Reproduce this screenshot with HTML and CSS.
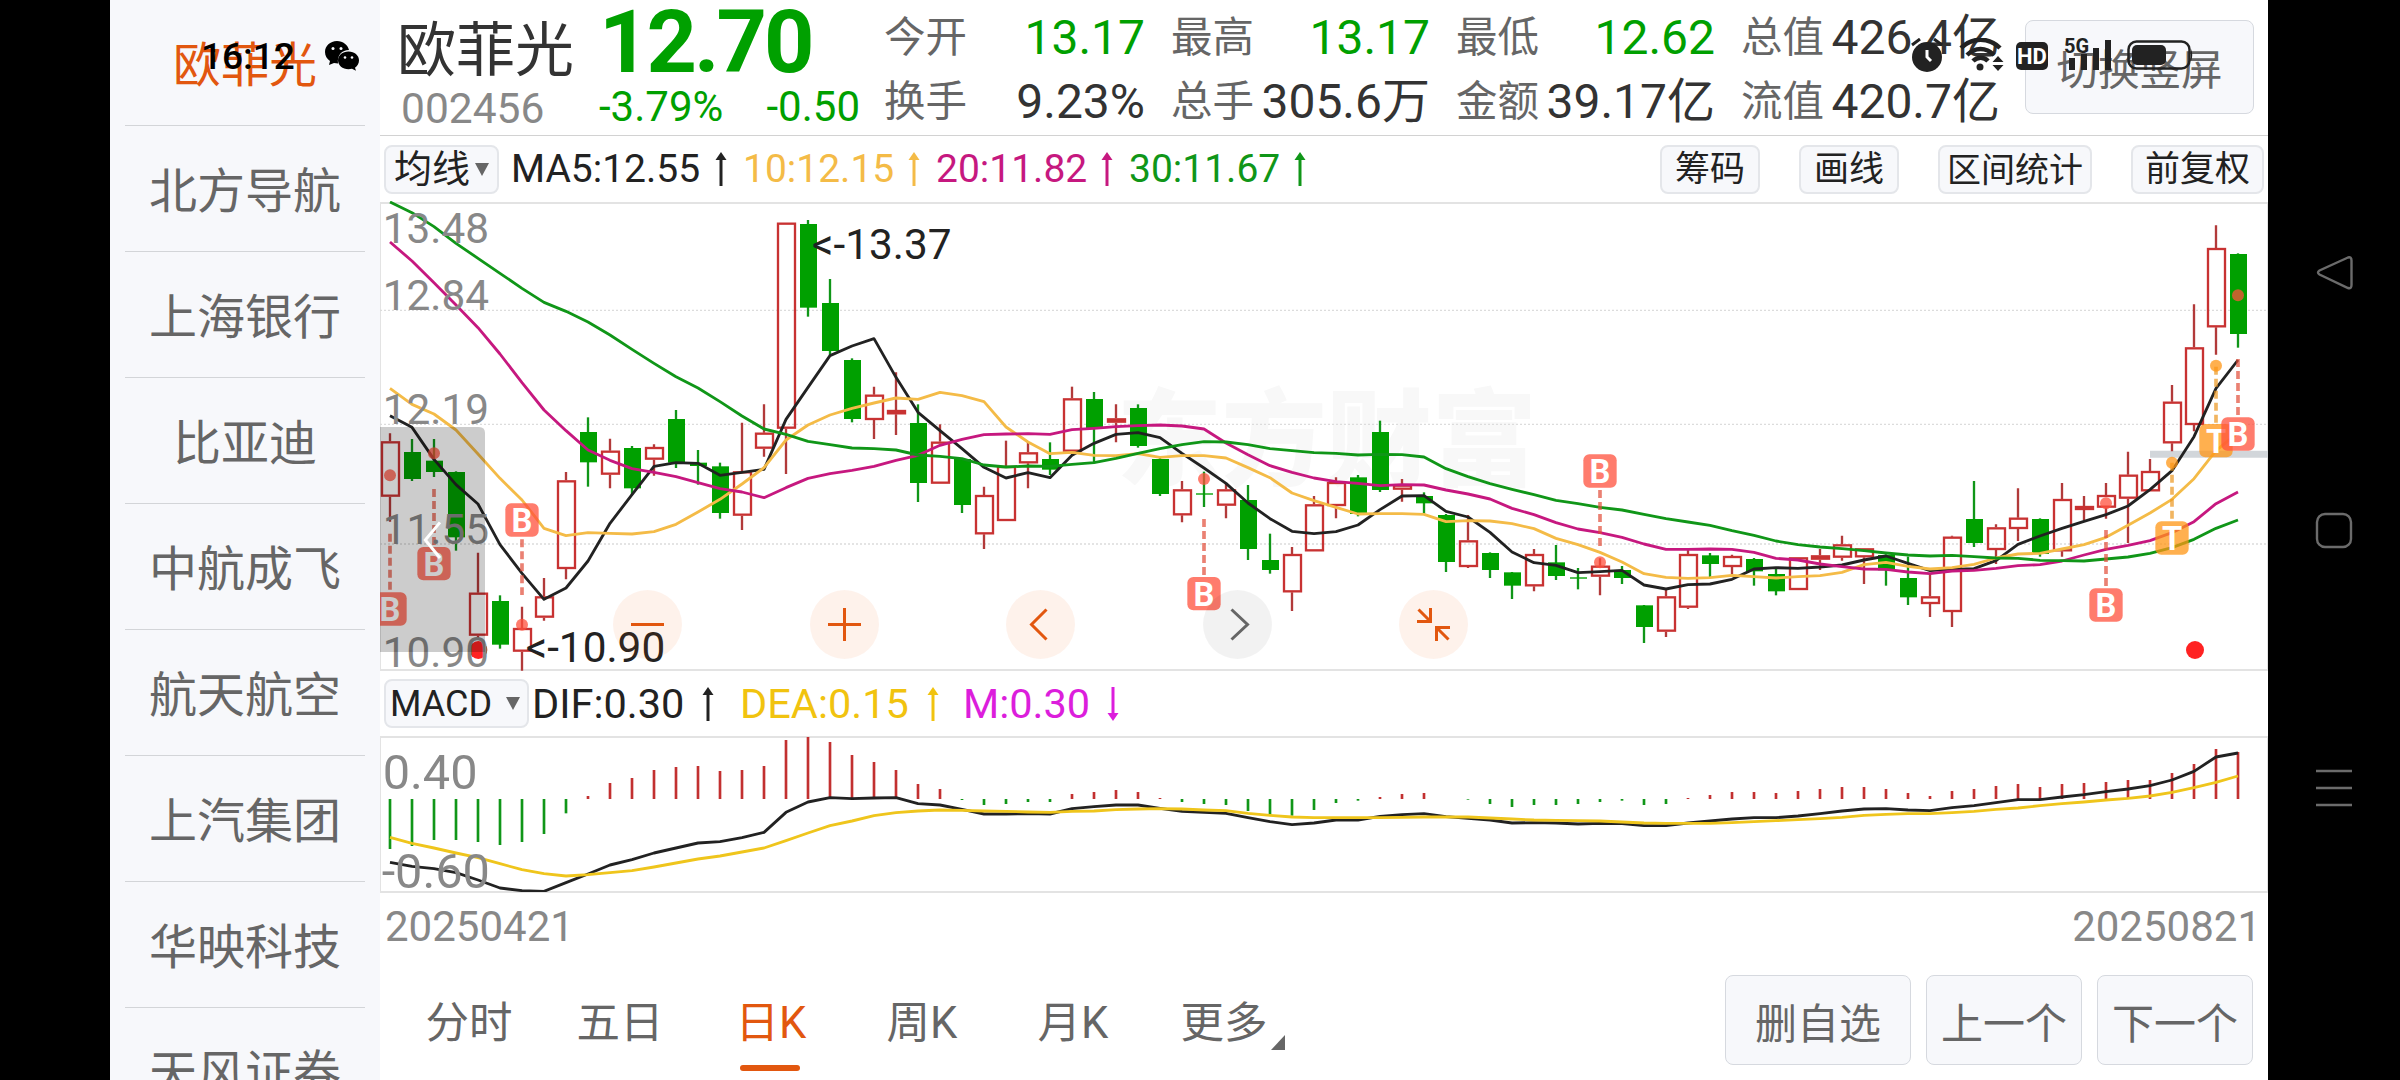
FILE: index.html
```
<!DOCTYPE html>
<html lang="zh-CN">
<head>
    <meta charset="UTF-8">
    <meta name="viewport" content="width=device-width, initial-scale=1.0">
    <title>欧菲光 002456</title>
    <link rel="stylesheet" href="styles.css">
</head>
<body>

<svg class="symbols" width="0" height="0">
    <symbol id="arrow-up" viewBox="0 0 12 34"><path d="M6 34V5" stroke="currentColor" stroke-width="3"/><path d="M6 0l5.500 8H.5z" fill="currentColor"/></symbol>
    <symbol id="arrow-down" viewBox="0 0 12 34"><path d="M6 0v29" stroke="currentColor" stroke-width="3"/><path d="M6 34l5.500-8H.5z" fill="currentColor"/></symbol>
</svg>

<div class="screen">
    <aside class="sidebar">
        <div class="stock active">欧菲光</div>
        <div class="stock">北方导航</div>
        <div class="stock">上海银行</div>
        <div class="stock">比亚迪</div>
        <div class="stock">中航成飞</div>
        <div class="stock">航天航空</div>
        <div class="stock">上汽集团</div>
        <div class="stock">华映科技</div>
        <div class="stock">天风证券</div>
    </aside>

    <main class="main">
        <header class="quote">
            <div class="quote-name">
                <div class="name">欧菲光</div>
                <div class="code">002456</div>
            </div>
            <div class="quote-price">
                <div class="price">12.70</div>
                <div class="change"><span>-3.79%</span><span>-0.50</span></div>
            </div>
            <div class="stats">
                <div class="stat"><label>今开</label><b class="down">13.17</b></div>
                <div class="stat"><label>最高</label><b class="down">13.17</b></div>
                <div class="stat"><label>最低</label><b class="down">12.62</b></div>
                <div class="stat"><label>总值</label><b>426.4亿</b></div>
                <div class="stat"><label>换手</label><b>9.23%</b></div>
                <div class="stat"><label>总手</label><b>305.6万</b></div>
                <div class="stat"><label>金额</label><b>39.17亿</b></div>
                <div class="stat"><label>流值</label><b>420.7亿</b></div>
            </div>
            <button class="rotate-button">切换竖屏</button>
        </header>

        <div class="toolbar">
            <button class="tool-button select-ma">均线<i class="caret"></i></button>
            <div class="ma ma5">MA5:12.55<svg class="arrow"><use href="#arrow-up"/></svg></div>
            <div class="ma ma10">10:12.15<svg class="arrow"><use href="#arrow-up"/></svg></div>
            <div class="ma ma20">20:11.82<svg class="arrow"><use href="#arrow-up"/></svg></div>
            <div class="ma ma30">30:11.67<svg class="arrow"><use href="#arrow-up"/></svg></div>
            <div class="tools">
                <button class="tool-button">筹码</button>
                <button class="tool-button">画线</button>
                <button class="tool-button wide">区间统计</button>
                <button class="tool-button adjust">前复权</button>
            </div>
        </div>

        <section class="k-panel">
            <svg id="kChart" viewBox="30 33 5664 1410"></svg>
            <div class="zoom-buttons">
                <button class="round"><svg viewBox="0 0 69 69"><path d="M18 34.5h33"/></svg></button>
                <button class="round"><svg viewBox="0 0 69 69"><path d="M18 34.5h33M34.5 18v33"/></svg></button>
                <button class="round"><svg viewBox="0 0 69 69"><path d="M40.500 19.500l-15 15 15 15"/></svg></button>
                <button class="round disabled"><svg viewBox="0 0 69 69"><path d="M28.500 19.500l16 15-16 15"/></svg></button>
                <button class="round"><svg viewBox="0 0 69 69"><path d="M18 31.500h13.500V18M31 31L19.500 19.500M51 37.500H37.500V51M38 38l11.500 11.500"/></svg></button>
            </div>
        </section>

        <div class="toolbar macd-bar">
            <button class="tool-button select-macd">MACD<i class="caret"></i></button>
            <div class="ind dif">DIF:0.30<svg class="arrow"><use href="#arrow-up"/></svg></div>
            <div class="ind dea">DEA:0.15<svg class="arrow"><use href="#arrow-up"/></svg></div>
            <div class="ind m">M:0.30<svg class="arrow"><use href="#arrow-down"/></svg></div>
        </div>

        <section class="macd-panel">
            <svg id="macdChart" viewBox="30 201 5664 465"></svg>
        </section>

        <div class="dates"><span>20250421</span><span>20250821</span></div>

        <footer class="footer">
            <nav class="tabs">
                <a class="tab">分时</a>
                <a class="tab">五日</a>
                <a class="tab active">日K</a>
                <a class="tab">周K</a>
                <a class="tab">月K</a>
                <a class="tab more">更多</a>
            </nav>
            <div class="actions">
                <button class="action remove">删自选</button>
                <button class="action">上一个</button>
                <button class="action">下一个</button>
            </div>
        </footer>
    </main>

    <div class="system-nav">
        <svg viewBox="0 0 40 40"><path d="M34 4.500L5.500 17.500q-3 2 0 4L34 35q3.500 1 3.500-3V7.500q0-4-3.500-3z"/></svg>
        <svg viewBox="0 0 40 40"><rect x="3" y="3" width="34" height="33" rx="8"/></svg>
        <svg viewBox="0 0 40 40"><path d="M2 2h36M2 19h36M2 36h36"/></svg>
    </div>
</div>

<!-- 系统状态栏 -->
<div class="status-left">
    <span>16:12</span>
    <svg width="34" height="30" viewBox="0 0 34 30">
        <path d="M12 0C5 0 0 5 0 11c0 4 2 7 5 9l-1 4 5-2 4 .5C12 14 17 9 24 9 23 4 18 0 12 0z"/>
        <path d="M23.500 10.500c-6 0-10.500 4-10.500 8.700 0 5 4.500 9 10.500 9l3.500-.5 4 2-1-3c2.500-2 4-4.500 4-7.500 0-4.700-4.500-8.700-10.500-8.700z"/>
        <g fill="#f7f8fb"><circle cx="8" cy="7.500" r="1.500"/><circle cx="16" cy="7.500" r="1.500"/><circle cx="20" cy="16.500" r="1.300"/><circle cx="27" cy="16.500" r="1.300"/></g>
    </svg>
</div>
<div class="status-right">
    <svg width="284" height="34" viewBox="0 0 284 34">
        <!-- 闹钟 -->
        <circle cx="17" cy="19" r="15"/>
        <path class="line" d="M2 7l8-6M24 1l8 6" stroke-width="3"/>
        <path d="M17 12v7l4 4" fill="none" stroke="#fff" stroke-width="3"/>
        <!-- WiFi -->
        <path class="line" d="M51 10c11-11 28-11 39 0M57 17c8-8 19-8 27 0M63 23c4.500-4.500 11-4.500 15 0" stroke-width="4.500"/>
        <circle cx="70" cy="29" r="3.500"/>
        <path d="M88 18l5.500 6h-11zM88 33l5.500-6h-11z"/>
        <!-- HD -->
        <rect x="106" y="4" width="32" height="28" rx="5"/>
        <text class="hd" x="122" y="26" text-anchor="middle">HD</text>
        <!-- 信号 -->
        <text class="g5" x="154" y="15">5G</text>
        <path d="M159 20h6v12h-6zM171 16h6v16h-6zM183 10h6v22h-6zM195 2h6v30h-6z"/>
        <!-- 电池 -->
        <rect class="line" x="218.500" y="3.500" width="61" height="27" rx="8" stroke-width="2.500"/>
        <rect x="222" y="7" width="34" height="20" rx="5"/>
        <path d="M281 11q2.500 6 0 12z"/>
    </svg>
</div>

<script src="script.js"></script>
</body>
</html>
```

FILE: styles.css
```
* {
    box-sizing: border-box;
}
body {
    margin: 0;
    width: 2400px;
    height: 1080px;
    overflow: hidden;
    background-color: #000;
    font-family: Roboto, "Noto Sans CJK SC", sans-serif;
    color: #333;
    position: relative;
}
button {
    font-family: inherit;
    margin: 0;
    padding: 0;
    color: #666;
    background-color: #f7f8fb;
    border: 1px solid #d6d9df;
    border-radius: 8px;
    white-space: nowrap;
}
.symbols {
    position: absolute;
}
.screen {
    display: flex;
    height: 1080px;
    padding-left: 110px;
}

/* 左侧股票列表 */
.sidebar {
    width: 270px;
    padding: 0 15px;
    background-color: #f7f8fb;
    overflow: hidden;
    flex-shrink: 0;
}
.stock {
    height: 126px;
    line-height: 132px;
    border-bottom: 1px solid #d3d5d8;
    text-align: center;
    font-size: 48px;
    color: #666;
}
.stock.active {
    color: #e2570f;
}
.main {
    width: 1888px;
    background-color: #fff;
    display: flex;
    flex-direction: column;
    flex-shrink: 0;
}

/* 行情头部 */
.quote {
    display: flex;
    height: 136px;
    border-bottom: 1px solid #d2d2d2;
    flex-shrink: 0;
}
.quote-name {
    width: 221px;
    padding-left: 17px;
}
.name {
    height: 84px;
    line-height: 101px;
    font-size: 59px;
    white-space: nowrap;
}
.code {
    padding-left: 4px;
    line-height: 49px;
    font-size: 42.5px;
    color: #888;
}
.quote-price {
    width: 283px;
    color: #00a000;
}
.price {
    height: 83px;
    line-height: 83px;
    font-size: 88px;
    font-weight: 700;
    letter-spacing: -3px;
    margin-left: -2px;
}
.change {
    display: flex;
    justify-content: space-between;
    width: 261px;
    margin-left: -2px;
    line-height: 48px;
    font-size: 42px;
    white-space: nowrap;
}
.stats {
    display: grid;
    grid-template-columns: 261px 259px 259px 259px;
    column-gap: 26px;
    grid-template-rows: 64px 64px;
    padding-top: 6px;
    width: 1118px;
    flex-shrink: 0;
}
.stat {
    display: flex;
    justify-content: space-between;
    line-height: 64px;
    white-space: nowrap;
}
.stat label {
    font-size: 41.5px;
    color: #666;
}
.stat b {
    font-size: 48px;
    font-weight: 400;
}
.stat .down {
    color: #00a000;
}
.rotate-button {
    width: 229px;
    height: 94px;
    margin: 20px 0 0 23px;
    font-size: 41.5px;
}

/* 均线工具条 */
.toolbar {
    display: flex;
    align-items: center;
    height: 66px;
    padding-left: 4px;
    flex-shrink: 0;
}
.tool-button {
    height: 49px;
    width: 100px;
    font-size: 35px;
    line-height: 46px;
    color: #222;
    border-width: 2px;
    border-color: #e4e6ea;
}
.select-ma {
    display: flex;
    align-items: center;
    justify-content: center;
    width: 115px;
    font-size: 38px;
    gap: 5px;
}
.caret {
    border: 7px solid transparent;
    border-top: 13px solid #666;
    border-bottom: 0;
}
.ma,
.ind {
    display: flex;
    align-items: center;
    line-height: 66px;
    white-space: nowrap;
}
.ma {
    font-size: 39px;
}
.ma5 {
    width: 216px;
    margin-left: 12px;
    color: #222;
}
.ma10, .ma20, .ma30 {
    width: 177px;
    margin-left: 16px;
}
.ma10 { color: #f4bb47; }
.ma20 { color: #c6187f; }
.ma30 { color: #109618; }
.arrow {
    width: 12px;
    height: 34px;
    margin-left: auto;
}
.tools {
    display: flex;
    gap: 39px;
    margin-left: auto;
    padding-right: 4px;
}
.tool-button.wide {
    width: 154px;
    font-size: 34px;
}
.tool-button.adjust {
    width: 133px;
}

/* K线 */
.k-panel {
    position: relative;
    height: 469px;
    border: 2px solid #e3e3e3;
    border-left-width: 1px;
    border-right-width: 1px;
    flex-shrink: 0;
}
.k-panel svg,
.macd-panel svg {
    display: block;
}
#kChart {
    width: 1888px;
    height: 470px;
    margin: -3px 0 0 -1px;
}
.zoom-buttons {
    position: absolute;
    left: 232px;
    top: 386px;
    display: flex;
    gap: 127.6px;
}
.round {
    width: 69px;
    height: 69px;
    border: none;
    border-radius: 50%;
    background-color: rgba(240, 90, 0, 0.08);
}
.round svg {
    fill: none;
    stroke: #e2570f;
    stroke-width: 3;
}
.round.disabled {
    background-color: rgba(0, 0, 0, 0.05);
}
.round.disabled svg {
    stroke: #666;
}

.axis {
    font-size: 127px;
    fill: #888;
}
.note {
    font-size: 127px;
    fill: #222;
}
.watermark {
    font-family: "Noto Sans CJK SC", sans-serif;
    font-size: 315px;
    font-weight: 900;
    fill: #f8f8f8;
}
.mark-text {
    font-size: 98px;
    font-weight: 700;
    fill: #fff;
    text-anchor: middle;
}
.line-path {
    fill: none;
    stroke-width: 8.5;
    stroke-linejoin: round;
}

/* MACD */
.macd-bar {
    height: 65px;
}
.select-macd {
    display: flex;
    align-items: center;
    justify-content: center;
    width: 145px;
    font-size: 36px;
    padding-right: 3px;
    gap: 14px;
}
.ind {
    font-size: 41.5px;
}
.dif {
    width: 182px;
    margin-left: 3px;
    color: #222;
}
.dea {
    width: 199px;
    margin-left: 26px;
    color: #f1c30f;
}
.m {
    width: 156px;
    margin-left: 24px;
    color: #dc1edc;
}
.macd-panel {
    height: 157px;
    border: 2px solid #e3e3e3;
    border-left-width: 1px;
    border-right-width: 1px;
    flex-shrink: 0;
}
#macdChart {
    width: 1888px;
    height: 155px;
    margin: -1px 0 0 -1px;
}
.macd-axis {
    font-size: 146px;
    fill: #888;
}
.dates {
    display: flex;
    justify-content: space-between;
    padding: 0 7px 0 5px;
    height: 68px;
    line-height: 67px;
    font-size: 42px;
    color: #888;
}

/* 底部 */
.footer {
    display: flex;
    justify-content: space-between;
    padding: 14px 15px 0 45px;
    flex: 1;
}
.tabs {
    display: flex;
    gap: 63px;
}
.tab {
    position: relative;
    width: 88px;
    height: 96px;
    text-align: center;
    white-space: nowrap;
    line-height: 97px;
    font-size: 43.5px;
    color: #666;
}
.tab.active {
    color: #e2570f;
}
.tab.active::after {
    content: "";
    position: absolute;
    left: 13px;
    top: 90px;
    width: 60px;
    height: 6px;
    border-radius: 3px;
    background-color: #e2570f;
}
.tab.more::after {
    content: "";
    position: absolute;
    right: -17px;
    top: 60px;
    border-left: 14px solid transparent;
    border-bottom: 15px solid #666;
}
.actions {
    display: flex;
    gap: 15px;
}
.action {
    width: 156px;
    height: 90px;
    font-size: 42px;
}
.action.remove {
    width: 186px;
}

/* 系统导航键 */
.system-nav {
    width: 132px;
    display: flex;
    flex-direction: column;
    align-items: center;
    padding-top: 253px;
    gap: 218px;
}
.system-nav svg {
    width: 40px;
    height: 40px;
    fill: none;
    stroke: #6b6b6b;
    stroke-width: 2.4;
}

.status-left {
    position: absolute;
    left: 201px;
    top: 35px;
    display: flex;
    align-items: center;
    gap: 30px;
    height: 42px;
    font-size: 37px;
    font-weight: 500;
    color: #000;
}
.status-right {
    position: absolute;
    left: 1910px;
    top: 38px;
    fill: #222;
}
.status-right .line {
    fill: none;
    stroke: #222;
}
.hd {
    font-size: 22px;
    font-weight: 700;
    fill: #fff;
}
.g5 {
    font-size: 20px;
    font-weight: 700;
}
```

FILE: script.js
```
// 每根K线: 类型(R涨 G跌) 最高 实体上沿 实体下沿 最低
const candles = `
R 730 754 920 995|G 747 786 867 873|G 747 812 846 861|G 844 846 1042 1082|R 1088 1208 1337 1345
G 1216 1233 1364 1376|R 1250 1314 1385 1442|R 1164 1219 1283 1292|R 846 871 1137 1168|G 682 726 817 890
R 746 782 854 895|G 768 774 895 915|R 763 771 809 857|G 660 687 818 834|G 780 818 828 884
G 818 829 969 986|R 698 844 977 1020|R 643 728 776 800|R 98 98 716 852|G 90 102 353 380
G 267 339 483 495|G 505 510 687 697|R 590 614 690 747|R 547 660 673 735|G 643 699 879 936
R 703 755 881 881|G 804 807 945 969|R 890 915 1033 1077|R 752 828 993 993|R 757 787 820 895
G 757 807 839 855|R 590 625 785 785|G 606 627 715 820|R 643 685 698 757|G 643 654 768 773
G 804 807 912 918|R 873 898 976 997|G 845 910 914 951|R 880 898 947 985|G 885 930 1077 1110
G 1031 1110 1140 1151|R 1071 1092 1207 1263|R 918 943 1084 1084|R 862 876 948 985|G 855 862 972 979
G 692 726 900 906|R 867 884 899 935|G 907 918 940 972|G 972 975 1116 1146|R 975 1051 1131 1134
G 1087 1089 1140 1164|G 1146 1147 1187 1227|R 1077 1092 1189 1204|G 1065 1117 1158 1170|G 1134 1162 1166 1198
R 1105 1127 1160 1216|G 1128 1140 1164 1182|G 1245 1246 1311 1359|R 1200 1219 1325 1341|R 1080 1092 1253 1257
G 1089 1096 1122 1162|R 1094 1098 1131 1153|G 1104 1107 1144 1187|G 1134 1152 1204 1216|R 1102 1102 1200 1200
R 1077 1096 1109 1140|R 1037 1063 1103 1112|R 1075 1075 1102 1182|G 1093 1095 1141 1187|G 1100 1164 1222 1245
R 1150 1219 1242 1281|R 1037 1040 1266 1311|G 873 987 1059 1071|R 1003 1012 1080 1122|R 895 983 1017 1053
G 985 987 1092 1100|R 879 927 1084 1100|R 918 948 960 990|R 879 915 953 986|R 785 854 926 1059
R 807 843 904 904|R 585 635 760 784|R 343 472 705 724|R 106 174 412 494|G 190 192 432 473
`.trim().split(/[|\n]/);

const ma5 = [677,712,808,884,942,1064,1150,1228,1194,1113,1000,914,829,818,820,856,847,838,688,592,497,468,446,562,667,722,776,832,864,848,863,796,760,733,728,743,790,834,880,939,986,1024,1031,1025,1005,959,918,917,964,981,1027,1086,1118,1126,1148,1145,1141,1185,1197,1184,1182,1168,1137,1133,1135,1131,1125,1110,1098,1120,1142,1138,1136,1112,1063,1038,1015,994,974,948,899,842,740,595,510];
const ma10 = [595,643,672,720,792,865,930,1015,1037,1028,1030,1032,1025,1003,966,928,882,833,750,705,675,655,639,624,628,607,617,635,711,756,791,787,796,797,791,802,797,797,804,833,863,909,932,952,972,971,971,973,995,992,993,1001,1016,1045,1064,1087,1116,1151,1162,1165,1163,1156,1160,1164,1160,1157,1147,1124,1117,1129,1137,1133,1123,1104,1092,1090,1077,1064,1042,1006,969,928,866,782,728];
const ma20 = [156,213,278,345,413,492,578,660,722,780,811,836,847,860,878,896,906,923,893,865,851,841,829,811,796,766,748,734,732,731,733,719,715,710,707,705,708,717,759,794,827,847,864,875,880,887,884,885,900,912,927,955,974,998,1017,1028,1042,1062,1078,1078,1077,1078,1087,1105,1110,1122,1130,1137,1138,1146,1151,1143,1141,1135,1127,1124,1113,1095,1078,1066,1052,1028,995,941,906];
const ma30 = [36,68,110,160,205,250,295,337,364,396,435,478,520,560,594,635,678,717,733,754,764,774,776,780,795,799,806,825,831,828,829,823,818,805,790,776,764,755,756,764,776,782,788,790,795,793,794,801,836,860,881,898,914,931,941,952,960,973,986,996,1006,1022,1036,1053,1064,1071,1076,1082,1089,1095,1098,1096,1100,1104,1105,1111,1112,1113,1107,1101,1090,1073,1048,1015,990];

const bars = [537,528,510,510,516,525,516,492,430,378,339,324,300,291,288,303,300,288,210,201,216,255,276,300,342,357,390,405,402,396,396,372,366,360,366,384,396,402,405,423,438,437,420,399,392,381,372,369,387,389,402,411,405,405,402,396,392,405,402,384,375,366,366,369,363,357,351,351,357,369,378,363,357,348,342,351,342,339,336,330,330,309,282,237,246];
const dif = [577,589,596,608,630,654,662,664,638,612,585,569,549,534,519,515,503,487,427,396,383,386,384,383,401,405,418,432,432,431,432,416,410,405,405,415,424,427,430,443,455,464,459,450,450,439,434,431,440,445,450,459,458,459,462,460,461,467,467,459,453,447,443,443,438,431,423,417,416,420,422,413,407,398,389,389,381,374,365,357,347,330,304,261,249];
const dea = [502,520,534,549,563,581,599,611,618,614,608,602,591,579,567,558,546,534,512,489,467,453,437,428,423,420,421,423,424,426,427,424,423,419,417,416,417,420,422,430,436,441,443,443,443,443,442,441,441,441,444,447,450,451,452,453,456,459,460,460,460,458,455,452,449,446,442,436,433,431,431,428,424,418,414,407,401,396,390,385,378,367,353,337,318];

// 买卖标记: 序号, 字母, 标签y, 圆点y, 虚线起止
const marks = [
    [0, 'B', 1257, 856, 1031, 1205],
    [2, 'B', 1121, 790, 897, 1070],
    [6, 'B', 990, 1304, 1048, 1215],
    [37, 'B', 1211, 867, 987, 1160],
    [55, 'B', 843, 1117, 900, 1070],
    [78, 'B', 1245, 940, 1020, 1192],
    [81, 'T', 1044, 818, 818, 992],
    [83, 'T', 752, 527, 530, 700],
    [84, 'B', 732, 316, 507, 680]
];

const cx = i => 60 + i * 66;
const path = (data, color) =>
    `<polyline class="line-path" stroke="${color}" points="${data.map((y, i) => cx(i) + ',' + y).join(' ')}"/>`;

function drawK() {
    let s = '<text class="watermark" x="2240" y="860">东方财富</text>';
    [361, 703, 1062].forEach(y => {
        s += `<path d="M30 ${y}H5694" stroke="#dcdcdc" stroke-width="4" stroke-dasharray="6 6"/>`;
    });
    s += '<path d="M5340 793H5694" stroke="#d2d6da" stroke-width="21"/>';

    candles.forEach((line, i) => {
        const [type, ...v] = line.split(' ');
        const [high, top, bottom, low] = v.map(Number);
        const x = cx(i);
        const color = type === 'R' ? '#c83232' : '#00a000';
        if (type === 'R') {
            s += `<path d="M${x} ${high}V${top}M${x} ${bottom}V${low}" stroke="#b23a3a" stroke-width="7"/>`;
            s += `<rect x="${x - 24}" y="${top + 3}" width="51" height="${Math.max(bottom - top - 6, 3)}" fill="none" stroke="${color}" stroke-width="7"/>`;
        } else {
            s += `<path d="M${x} ${high}V${low}" stroke="#109618" stroke-width="7"/>`;
            s += `<rect x="${x - 24}" y="${top}" width="51" height="${bottom - top}" fill="${color}"/>`;
        }
    });

    s += path(ma5, '#222') + path(ma10, '#f4bb47') + path(ma20, '#c6187f') + path(ma30, '#109618');

    marks.forEach(([i, letter, y, dot, from, to]) => {
        const x = cx(i);
        const rgb = letter === 'B' ? '255,80,60' : '255,150,20';
        s += `<path d="M${x} ${from}V${to}" stroke="rgba(${letter === 'B' ? '225,75,55' : '235,150,30'},.7)" stroke-width="11" stroke-dasharray="24 12"/>`;
        s += `<circle cx="${x}" cy="${dot}" r="18" fill="rgba(${rgb},.75)"/>`;
        s += `<rect x="${x - 50}" y="${y - 50}" width="100" height="100" rx="18" fill="rgba(${rgb},.75)"/>`;
        s += `<text class="mark-text" x="${x}" y="${y + 36}">${letter}</text>`;
    });
    s += '<circle cx="325" cy="1380" r="27" fill="#f22"/><circle cx="5475" cy="1380" r="27" fill="#f22"/>';

    [['13.48', 158], ['12.84', 360], ['12.19', 702], ['11.55', 1061], ['10.90', 1430]].forEach(([t, y]) => {
        s += `<text class="axis" x="38" y="${y}">${t}</text>`;
    });
    s += '<text class="note" x="1326" y="207">&lt;-13.37</text>';
    s += '<text class="note" x="467" y="1415">&lt;-10.90</text>';

    // 左侧展开把手
    s += '<path d="M30 711H327q18 0 18 18V1386H30z" fill="rgba(0,0,0,.2)"/>';
    s += '<path d="M210 997L166 1050L210 1104" fill="none" stroke="#fff" stroke-width="9"/>';
    document.getElementById('kChart').innerHTML = s;
}

function drawMacd() {
    let s = '';
    bars.forEach((y, i) => {
        s += `<path d="M${cx(i)} 387V${y}" stroke="${y < 387 ? '#c23030' : '#109618'}" stroke-width="8"/>`;
    });
    s += path(dif, '#222') + path(dea, '#efc51c');
    s += '<text class="macd-axis" x="38" y="358">0.40</text>';
    s += '<text class="macd-axis" x="35" y="653">-0.60</text>';
    document.getElementById('macdChart').innerHTML = s;
}

drawK();
drawMacd();
```
